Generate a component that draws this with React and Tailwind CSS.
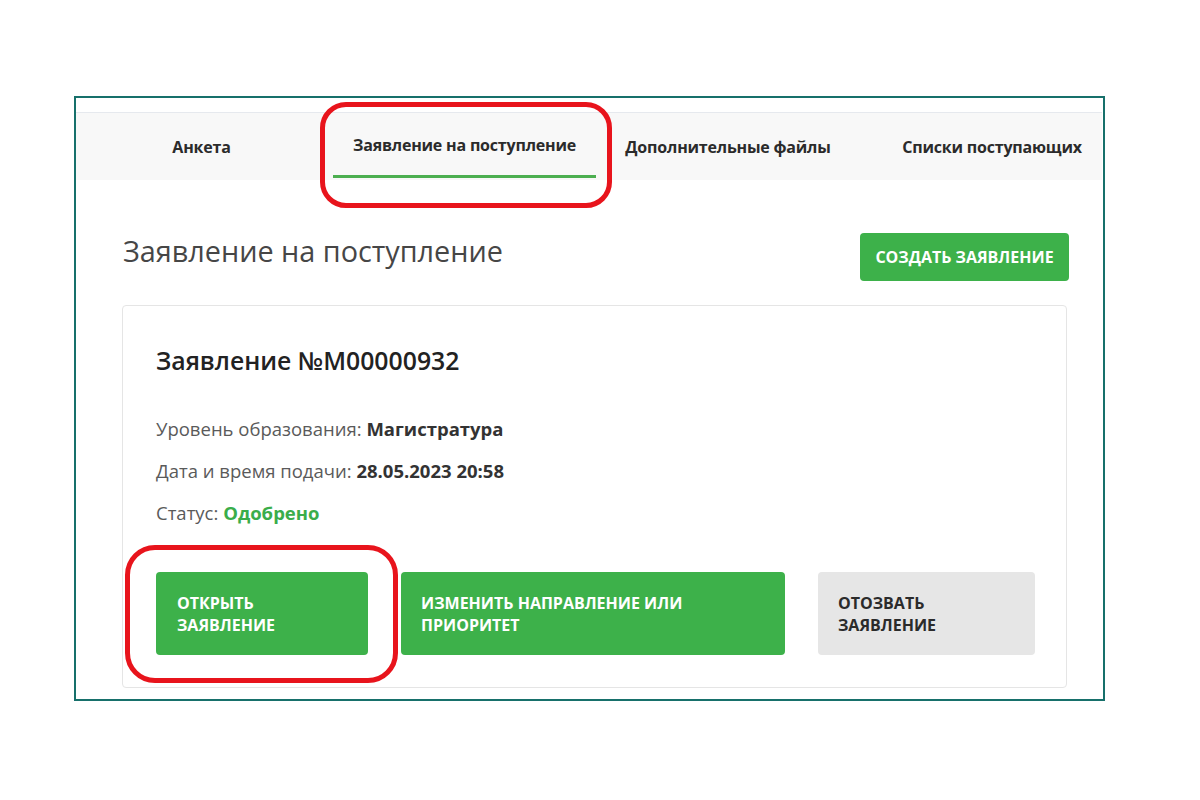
import React from 'react';

const tabs = [
  { label: 'Анкета', w: 'w-[257px] pr-[6px]' },
  { label: 'Заявление на поступление', w: 'w-[263px]', active: true },
  { label: 'Дополнительные файлы', w: 'w-[264px]' },
  { label: 'Списки поступающих', w: 'w-[240px] pl-[24px]' },
];

const rows = [
  { label: 'Уровень образования:', value: 'Магистратура' },
  { label: 'Дата и время подачи:', value: '28.05.2023 20:58' },
  { label: 'Статус:', value: 'Одобрено', green: true },
];

export default function App() {
  return (
    <div className="relative w-[1200px] h-[800px] bg-white pt-[96px] pl-[74px] font-['Open_Sans',sans-serif]">
      <div className="w-[1031px] h-[605px] border-2 border-[#17706b] pt-[14px]">
        {/* tabs */}
        <div className="flex h-[68px] bg-[#f8f8f8] border-t border-[#e6e9ee] mr-[1px]">
          {tabs.map((t) => (
            <div key={t.label} className={`${t.w} relative flex items-center justify-center`}>
              <span className={`text-[16px] font-bold text-[#2b2b2b] tracking-[-0.2px] ${t.active ? '-mt-[3px]' : ''}`}>
                {t.label}
              </span>
              {t.active && <div className="absolute left-0 right-0 bottom-[2px] h-[3px] bg-[#4caf50]" />}
            </div>
          ))}
        </div>

        <div className="ml-[46px] w-[947px]">
          <div className="flex justify-between items-start mt-[53px]">
            <h1 className="ml-[1px] -mt-[1px] text-[28.8px] leading-[38px] font-normal text-[#464646]">Заявление на поступление</h1>
            <button className="h-[48px] w-[209px] rounded bg-[#3db14a] text-white text-[16px] font-bold uppercase">
              Создать заявление
            </button>
          </div>

          <div className="mt-[24px] w-[945px] h-[383px] border border-[#e5e5e5] rounded pl-[33px] pt-[38px]">
            <h2 className="text-[24.8px] leading-[32px] font-semibold text-[#222]">Заявление №М00000932</h2>
            <div className="mt-[40px] flex flex-col gap-[16px]">
              {rows.map((r) => (
                <p key={r.label} className="text-[18.5px] leading-[26px] text-[#5a5a5a]">
                  {r.label}{' '}
                  <span className={`font-bold ${r.green ? 'text-[#3aad4a]' : 'text-[#333]'}`}>{r.value}</span>
                </p>
              ))}
            </div>
            <div className="mt-[46px] flex gap-[33px]">
              <button className="w-[212px] h-[83px] rounded bg-[#3db14a] text-white text-left pl-[21px] text-[16px] leading-[22px] font-bold">
                ОТКРЫТЬ<br />ЗАЯВЛЕНИЕ
              </button>
              <button className="w-[384px] h-[83px] rounded bg-[#3db14a] text-white text-left pl-[20px] text-[16px] leading-[22px] font-bold">
                ИЗМЕНИТЬ НАПРАВЛЕНИЕ ИЛИ<br />ПРИОРИТЕТ
              </button>
              <button className="w-[217px] h-[83px] rounded bg-[#e6e6e6] text-[#2b2b2b] text-left pl-[20px] text-[16px] leading-[22px] font-bold">
                ОТОЗВАТЬ<br />ЗАЯВЛЕНИЕ
              </button>
            </div>
          </div>
        </div>
      </div>

      {/* red annotation outlines */}
      <div className="absolute left-[320px] top-[102px] w-[292px] h-[106px] border-[5px] border-[#e8141c] rounded-[26px]" />
      <div className="absolute left-[125px] top-[545px] w-[273px] h-[138px] border-[5px] border-[#e8141c] rounded-[30px]" />
    </div>
  );
}
